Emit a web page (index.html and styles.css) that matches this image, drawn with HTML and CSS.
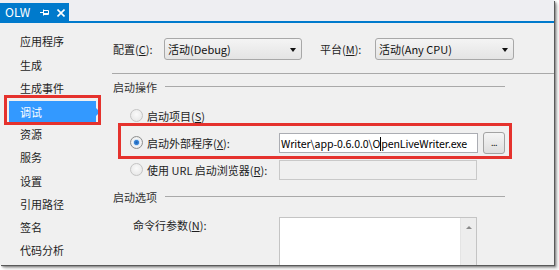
FILE: index.html
```html
<!DOCTYPE html>
<html lang="zh-CN">
<head>
<meta charset="utf-8">
<title>OLW</title>
<link rel="stylesheet" href="styles.css">
</head>
<body>
<div class="window">
  <div class="tabbar">
    <div class="tab">
      <span class="tab-title">OLW</span>
      <svg class="tab-pin" width="9" height="7" viewBox="0 0 9 7"><path d="M0 3.5H3M3.5 0.5V6.5M3.5 1.5H8.5V5.5H3.5M3.5 4.5H8.5" fill="none" stroke="#fff" stroke-width="1"/></svg>
      <svg class="tab-close" width="8" height="8" viewBox="0 0 8 8"><path d="M0.5 0.5L7.5 7.5M7.5 0.5L0.5 7.5" stroke="#fff" stroke-width="1.6"/></svg>
    </div>
  </div>
  <div class="body">
    <nav class="sidebar">
      <div class="nav-item">应用程序</div>
      <div class="nav-item">生成</div>
      <div class="nav-item">生成事件</div>
      <div class="nav-item selected"><span class="sel">调试</span></div>
      <div class="nav-item">资源</div>
      <div class="nav-item">服务</div>
      <div class="nav-item">设置</div>
      <div class="nav-item">引用路径</div>
      <div class="nav-item">签名</div>
      <div class="nav-item">代码分析</div>
    </nav>
    <main class="content">
      <div class="config-row">
        <span class="lbl lbl-config">配置(<u>C</u>):</span>
        <div class="combo combo-config"><span>活动(Debug)</span><i class="caret"></i></div>
        <span class="lbl lbl-platform">平台(<u>M</u>):</span>
        <div class="combo combo-platform"><span>活动(Any CPU)</span><i class="caret"></i></div>
      </div>
      <div class="sep"></div>
      <div class="group-head"><span>启动操作</span><i class="rule"></i></div>
      <div class="radio-row">
        <label class="radio-label"><span class="radio"></span>启动项目(<u>S</u>)</label>
      </div>
      <div class="radio-row">
        <label class="radio-label"><span class="radio checked"></span>启动外部程序(<u>X</u>):</label>
        <div class="textbox"><span class="val">Writer\app-0.6.0.0\O<i class="text-caret"></i>penLiveWriter.exe</span></div>
        <div class="browse">...</div>
      </div>
      <div class="radio-row">
        <label class="radio-label"><span class="radio"></span>使用 URL 启动浏览器(<u>R</u>):</label>
        <div class="textbox disabled"></div>
      </div>
      <div class="group-head group-two"><span>启动选项</span><i class="rule"></i></div>
      <div class="args-row">
        <span class="args-label">命令行参数(<u>N</u>):</span>
        <div class="textarea"><div class="scroll"><i class="up"></i></div></div>
      </div>
    </main>
  </div>
  <div class="annot annot-nav"></div>
  <div class="annot annot-ext"></div>
</div>
</body>
</html>
```

FILE: styles.css
```css
* { box-sizing: border-box; }
html, body { margin: 0; padding: 0; background: #fff; }
body {
  width: 559px; height: 270px; overflow: hidden;
  font-family: "Noto Sans CJK SC", "Noto Sans", sans-serif;
  font-size: 11px; color: #1e1e1e;
}
.window {
  position: relative;
  width: 554px; height: 265px;
  background: #f0f0f0;
  overflow: hidden;
  box-shadow: 1px 1px 0 #5a5a5a, 2px 2px 2px rgba(0,0,0,.45), 4px 4px 3px rgba(0,0,0,.15);
}
.tabbar {
  height: 23px;
  background: #eeeef2;
  border-bottom: 2px solid #007acc;
  padding-top: 3px;
}
.tab {
  width: 69px; height: 18px;
  background: #007acc;
  display: flex; align-items: center;
  padding-left: 5px;
  color: #fff;
}
.tab-title { font-size: 12px; line-height: 18px; }
.tab-pin { margin-left: 10px; margin-top: 1px; }
.tab-close { margin-left: 8px; margin-top: 1px; }

.body { display: flex; height: 242px; }
.sidebar { width: 105px; padding-top: 7.4px; flex: none; }
.nav-item {
  height: 23.2px; line-height: 23.2px;
  padding-left: 20px;
  font-size: 11px; color: #1e1e1e;
}
.nav-item.selected { padding-left: 9px; display: flex; align-items: center; }
.sel {
  position: relative;
  display: block;
  width: 87px; height: 22px; line-height: 22px;
  padding-left: 11px;
  background: #3399ff; color: #fff;
}
.sel::after {
  content: ""; position: absolute;
  left: 87px; top: 7px;
  border-left: 4px solid #3399ff;
  border-top: 4px solid transparent;
  border-bottom: 4px solid transparent;
}

.content { flex: 1; }
.config-row {
  margin-top: 15px; height: 22px;
  display: flex; align-items: center;
  padding-left: 8px;
}
.lbl { line-height: 22px; }
.lbl-config { width: 51px; }
.lbl-platform { width: 55px; margin-left: 18px; }
.combo {
  height: 22px;
  border: 1px solid #a8a8a8; border-radius: 3px;
  background: linear-gradient(#f4f4f4, #e4e4e4);
  display: flex; align-items: center; justify-content: space-between;
  padding: 0 5px 0 3px;
  color: #111;
}
.combo-config { width: 138px; }
.combo-platform { width: 139px; }
.caret {
  width: 0; height: 0;
  border-top: 4px solid #111;
  border-left: 3.5px solid transparent;
  border-right: 3.5px solid transparent;
  margin-top: 1px;
}
.sep { margin-top: 13px; margin-left: 7px; height: 1px; background: #a9a9a9; }
.group-head {
  margin-top: 6px; height: 14px;
  display: flex; align-items: center;
  padding-left: 8px; margin-right: 49px;
  color: #333;
}
.group-head .rule { flex: 1; height: 1px; background: #a9a9a9; margin-left: 8px; margin-top: -1px; }
.group-two { margin-top: 7px; }
.radio-row {
  height: 27px;
  display: flex; align-items: center;
  padding-left: 25px;
}
.group-head + .radio-row { margin-top: 8px; }
.radio-label { width: 149px; display: flex; align-items: center; white-space: nowrap; }
.radio {
  width: 13px; height: 13px; border-radius: 50%;
  border: 1px solid #c4c4c4;
  background: radial-gradient(circle at 50% 40%, #fafafa, #e3e3e3);
  margin-right: 4px; flex: none;
}
.radio.checked {
  border-color: #8e8f8f;
  background: radial-gradient(circle, #1a5fb4 0, #3b86d6 2.2px, #cfe3f7 3px, #f4f4f4 4px, #e6e6e6 6px);
}
.textbox {
  width: 199px; height: 20px;
  background: #fff;
  border: 1px solid #abadb3;
  overflow: hidden; white-space: nowrap;
  line-height: 18px;
  padding-left: 1px;
}
.textbox.disabled { width: 198px; background: #f0f0f0; border-color: #c9c9c9; }
.val { color: #000; font-size: 10.6px; letter-spacing: -0.12px; }
.text-caret { display: inline-block; width: 1px; height: 14px; background: #000; vertical-align: -3px; }
.browse {
  width: 22px; height: 22px; margin-left: 5px;
  border: 1px solid #a3a3a3; border-radius: 3px;
  background: linear-gradient(#f5f5f5, #dedede);
  font-size: 9px; line-height: 20px; text-align: center; color: #222;
  letter-spacing: -0.5px;
}
.args-row { margin-top: 13px; display: flex; padding-left: 28px; }
.args-label { width: 146px; line-height: 16px; }
.textarea {
  width: 198px; height: 52px;
  background: #fff;
  border: 1px solid #c4c4c4;
  display: flex; justify-content: flex-end;
}
.scroll {
  width: 16px; height: 100%;
  background: #ededed;
  border-left: 1px solid #e4e4e4;
  display: flex; justify-content: center;
  padding-top: 8px;
}
.up {
  width: 0; height: 0;
  border-bottom: 3px solid #8a8a8a;
  border-left: 3px solid transparent;
  border-right: 3px solid transparent;
}
.annot { position: absolute; border: 3px solid #e5322d; pointer-events: none; }
.annot-nav { left: 4px; top: 95px; width: 97px; height: 30px; }
.annot-ext { left: 118px; top: 123px; width: 394px; height: 36px; }
```
